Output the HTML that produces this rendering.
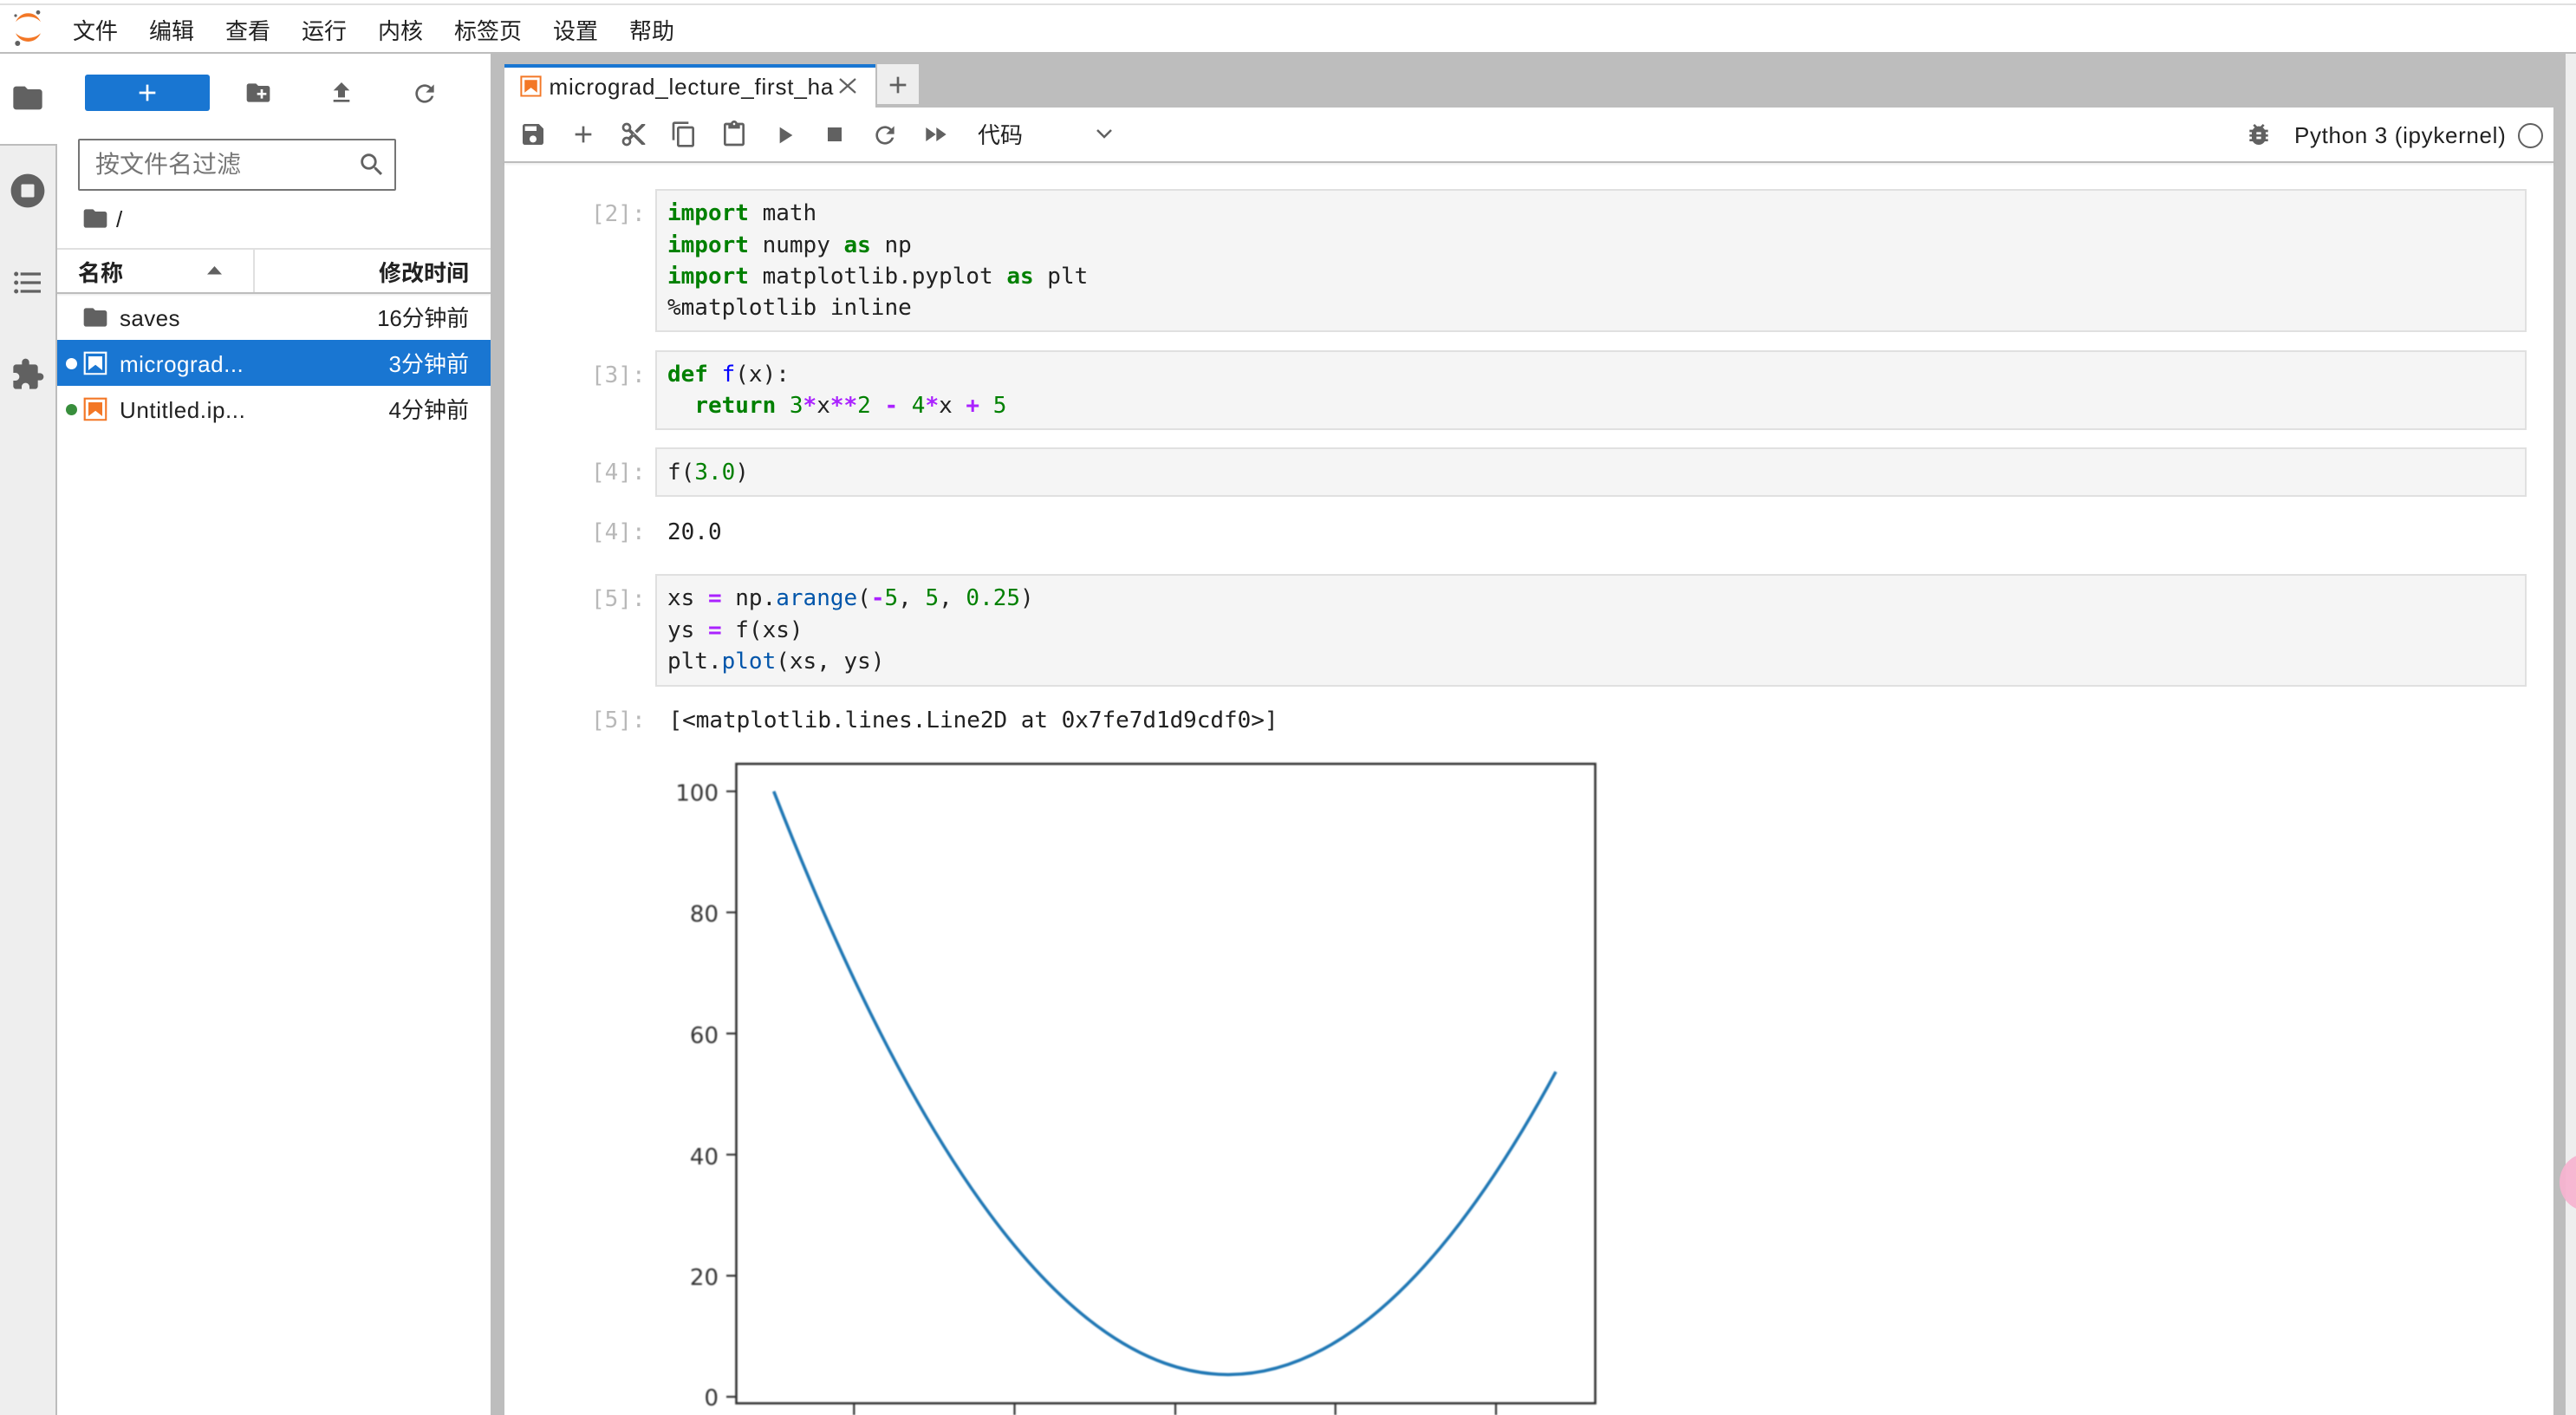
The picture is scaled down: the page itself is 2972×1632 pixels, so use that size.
<!DOCTYPE html>
<html lang="zh">
<head>
<meta charset="utf-8">
<title>JupyterLab</title>
<style>
html,body{margin:0;padding:0;width:2972px;height:1632px;overflow:hidden;background:#fff}
body{position:relative;font-family:"Liberation Sans","Noto Sans CJK SC",sans-serif;color:#212121}
.a{position:absolute}
.t{position:absolute;white-space:pre;font-size:26px;line-height:40px}
svg.i{position:absolute;fill:#616161;overflow:visible}
.c{position:absolute;left:756px;width:2159px;box-sizing:border-box;border:2px solid #e0e0e0;background:#f5f5f5}
.m{position:absolute;left:770px;white-space:pre;font-family:"DejaVu Sans Mono",monospace;font-size:26px;line-height:36px;color:#212121}
.p{position:absolute;left:682px;white-space:pre;font-family:"DejaVu Sans Mono",monospace;font-size:26px;line-height:36px;color:#b8b8b8}
.k{color:#008000;font-weight:bold}
.n{color:#008000}
.o{color:#aa22ff;font-weight:bold}
.f{color:#0000ff}
.v{color:#0055aa}
</style>
</head>
<body>
<!-- top bar -->
<div class="a" style="left:0;top:4px;width:2972px;height:2px;background:#e0e0e0"></div>
<div class="a" style="left:0;top:60px;width:2972px;height:2px;background:#bdbdbd"></div>
<svg class="a" style="left:0;top:0" width="60" height="60">
<path fill="#f37726" d="M18 25.3C21 19 26 15.3 32.5 15.3S44 19 47 25.3C43 21 38 19.3 32.5 19.3S22 21 18 25.3z"/>
<path fill="#f37726" d="M18 38.3C21 44.5 26 48 32.5 48S44 44.5 47 38.3C43 42 38 43.7 32.5 43.7S22 42 18 38.3z"/>
<circle cx="44" cy="14.3" r="2.4" fill="#616161"/><circle cx="18" cy="18" r="1.6" fill="#616161"/><circle cx="20.3" cy="50" r="3" fill="#616161"/>
</svg>
<div class="t" style="left:84px;top:16px">文件</div>
<div class="t" style="left:172px;top:16px">编辑</div>
<div class="t" style="left:260px;top:16px">查看</div>
<div class="t" style="left:348px;top:16px">运行</div>
<div class="t" style="left:436px;top:16px">内核</div>
<div class="t" style="left:524px;top:16px">标签页</div>
<div class="t" style="left:638px;top:16px">设置</div>
<div class="t" style="left:726px;top:16px">帮助</div>

<!-- left sidebar -->
<div class="a" style="left:0;top:166px;width:64px;height:1466px;background:#eeeeee;border-top:2px solid #bdbdbd;border-right:2px solid #bdbdbd"></div>
<svg class="i" style="left:12px;top:93px" width="40" height="40" viewBox="0 0 24 24"><path d="M10 4H4c-1.1 0-1.99.9-1.99 2L2 18c0 1.1.9 2 2 2h16c1.1 0 2-.9 2-2V8c0-1.1-.9-2-2-2h-8l-2-2z"/></svg>
<svg class="i" style="left:12px;top:200px" width="40" height="40" viewBox="0 0 512 512"><path d="M256 8C119 8 8 119 8 256s111 248 248 248 248-111 248-248S393 8 256 8zm96 328c0 8.8-7.2 16-16 16H176c-8.8 0-16-7.2-16-16V176c0-8.8 7.2-16 16-16h160c8.8 0 16 7.2 16 16v160z"/></svg>
<svg class="i" style="left:12px;top:305.5px" width="40" height="40" viewBox="0 0 24 24"><path d="M7,5H21V7H7V5M7,13V11H21V13H7M4,4.5A1.5,1.5 0 0,1 5.5,6A1.5,1.5 0 0,1 4,7.5A1.5,1.5 0 0,1 2.5,6A1.5,1.5 0 0,1 4,4.5M4,10.5A1.5,1.5 0 0,1 5.5,12A1.5,1.5 0 0,1 4,13.5A1.5,1.5 0 0,1 2.5,12A1.5,1.5 0 0,1 4,10.5M7,19V17H21V19H7M4,16.5A1.5,1.5 0 0,1 5.5,18A1.5,1.5 0 0,1 4,19.5A1.5,1.5 0 0,1 2.5,18A1.5,1.5 0 0,1 4,16.5Z"/></svg>
<svg class="i" style="left:12px;top:412px" width="40" height="40" viewBox="0 0 24 24"><path d="M20.5 11H19V7c0-1.1-.9-2-2-2h-4V3.5C13 2.12 11.88 1 10.5 1S8 2.12 8 3.5V5H4c-1.1 0-1.99.9-1.99 2v3.8H3.5c1.49 0 2.7 1.21 2.7 2.7s-1.21 2.7-2.7 2.7H2V20c0 1.1.9 2 2 2h3.8v-1.5c0-1.49 1.21-2.7 2.7-2.7 1.49 0 2.7 1.21 2.7 2.7V22H17c1.1 0 2-.9 2-2v-4h1.5c1.38 0 2.5-1.12 2.5-2.5S21.88 11 20.5 11z"/></svg>

<!-- file panel toolbar -->
<div class="a" style="left:98px;top:86px;width:144px;height:42px;background:#1976d2;border-radius:3px"></div>
<svg class="i" style="left:154px;top:91px;fill:#fff" width="32" height="32" viewBox="0 0 24 24"><path d="M19 13h-6v6h-2v-6H5v-2h6V5h2v6h6v2z"/></svg>
<svg class="i" style="left:282px;top:91px" width="32" height="32" viewBox="0 0 24 24"><path d="M20 6h-8l-2-2H4c-1.11 0-1.99.89-1.99 2L2 18c0 1.11.89 2 2 2h16c1.11 0 2-.89 2-2V8c0-1.11-.89-2-2-2zm-1 8h-3v3h-2v-3h-3v-2h3V9h2v3h3v2z"/></svg>
<svg class="i" style="left:378px;top:91px" width="32" height="32" viewBox="0 0 24 24"><path d="M9 16h6v-6h4l-7-7-7 7h4zm-4 2h14v2H5z"/></svg>
<svg class="i" style="left:474px;top:91.5px" width="32" height="32" viewBox="0 0 24 24"><path d="M17.65 6.35C16.2 4.9 14.21 4 12 4c-4.42 0-7.99 3.58-7.99 8s3.57 8 7.99 8c3.73 0 6.84-2.55 7.73-6h-2.08c-.82 2.33-3.04 4-5.65 4-3.31 0-6-2.69-6-6s2.69-6 6-6c1.66 0 3.14.69 4.22 1.78L13 11h7V4l-2.35 2.35z"/></svg>

<!-- search -->
<div class="a" style="left:90px;top:160px;width:363px;height:56px;border:2px solid #757575;border-radius:2px"></div>
<div class="t" style="left:110px;top:170px;font-size:28px;color:#757575">按文件名过滤</div>
<svg class="i" style="left:412px;top:173px" width="34" height="34" viewBox="0 0 24 24"><path d="M15.5 14h-.79l-.28-.27C15.41 12.59 16 11.11 16 9.5 16 5.91 13.09 3 9.5 3S3 5.91 3 9.5 5.91 16 9.5 16c1.61 0 3.09-.59 4.23-1.57l.27.28v.79l5 4.99L20.49 19l-4.99-5zm-6 0C7.01 14 5 11.99 5 9.5S7.01 5 9.5 5 14 7.01 14 9.5 11.99 14 9.5 14z"/></svg>

<!-- breadcrumb -->
<svg class="i" style="left:94px;top:236px" width="32" height="32" viewBox="0 0 24 24"><path d="M10 4H4c-1.1 0-1.99.9-1.99 2L2 18c0 1.1.9 2 2 2h16c1.1 0 2-.9 2-2V8c0-1.1-.9-2-2-2h-8l-2-2z"/></svg>
<div class="t" style="left:134px;top:233px">/</div>

<!-- list header -->
<div class="a" style="left:66px;top:286px;width:500px;height:2px;background:#e0e0e0"></div>
<div class="a" style="left:292px;top:288px;width:2px;height:49px;background:#e0e0e0"></div>
<div class="t" style="left:90px;top:295px;font-weight:bold">名称</div>
<svg class="a" style="left:239px;top:307px" width="18" height="10"><path d="M0 9.5L8.5 0L17 9.5z" fill="#616161"/></svg>
<div class="t" style="right:2431px;top:295px;font-weight:bold">修改时间</div>
<div class="a" style="left:66px;top:337px;width:500px;height:2px;background:#bdbdbd;box-shadow:0 1px 2px rgba(0,0,0,.12)"></div>

<!-- rows -->
<svg class="i" style="left:94px;top:350px" width="32" height="32" viewBox="0 0 24 24"><path d="M10 4H4c-1.1 0-1.99.9-1.99 2L2 18c0 1.1.9 2 2 2h16c1.1 0 2-.9 2-2V8c0-1.1-.9-2-2-2h-8l-2-2z"/></svg>
<div class="t" style="left:138px;top:347px;letter-spacing:.4px">saves</div>
<div class="t" style="right:2431px;top:346.5px;letter-spacing:-.2px">16分钟前</div>

<div class="a" style="left:66px;top:392px;width:500px;height:53px;background:#1976d2"></div>
<div class="a" style="left:75.5px;top:412.5px;width:13px;height:13px;border-radius:50%;background:#fff"></div>
<svg class="a" style="left:94px;top:403px" width="32" height="32" viewBox="0 0 22 22"><path fill="#fff" d="M18.7 3.3v15.4H3.3V3.3h15.4m1.5-1.5H1.8v18.3h18.3l.1-18.3z"/><path fill="#fff" d="M16.5 16.5l-5.4-4.3-5.6 4.3v-11h11z"/></svg>
<div class="t" style="left:138px;top:400px;color:#fff;letter-spacing:.5px">micrograd...</div>
<div class="t" style="right:2431px;top:399.5px;color:#fff">3分钟前</div>

<div class="a" style="left:75.5px;top:465.5px;width:13px;height:13px;border-radius:50%;background:#388e3c"></div>
<svg class="a" style="left:94px;top:456px" width="32" height="32" viewBox="0 0 22 22"><path fill="#f37726" d="M18.7 3.3v15.4H3.3V3.3h15.4m1.5-1.5H1.8v18.3h18.3l.1-18.3z"/><path fill="#f37726" d="M16.5 16.5l-5.4-4.3-5.6 4.3v-11h11z"/></svg>
<div class="t" style="left:138px;top:453px;letter-spacing:.58px">Untitled.ip...</div>
<div class="t" style="right:2431px;top:452.5px">4分钟前</div>

<!-- main gray frame -->
<div class="a" style="left:566px;top:62px;width:16px;height:1570px;background:#bdbdbd"></div>
<div class="a" style="left:582px;top:62px;width:2364px;height:62px;background:#bdbdbd"></div>
<div class="a" style="left:2946px;top:62px;width:14px;height:1570px;background:#bdbdbd"></div>
<div class="a" style="left:2960px;top:62px;width:12px;height:1570px;background:#eeeeee"></div>

<!-- tab -->
<div class="a" style="left:582px;top:74px;width:428px;height:4px;background:#1976d2"></div>
<div class="a" style="left:582px;top:78px;width:428px;height:46px;background:#fff"></div>
<svg class="a" style="left:597.5px;top:84.5px" width="29" height="29" viewBox="0 0 22 22"><path fill="#f37726" d="M18.7 3.3v15.4H3.3V3.3h15.4m1.5-1.5H1.8v18.3h18.3l.1-18.3z"/><path fill="#f37726" d="M16.5 16.5l-5.4-4.3-5.6 4.3v-11h11z"/></svg>
<div class="t" style="left:633.5px;top:80px;letter-spacing:.8px">micrograd_lecture_first_ha</div>
<svg class="a" style="left:968px;top:90px" width="20" height="18"><path d="M1 1L19 17M19 1L1 17" stroke="#616161" stroke-width="2.2" fill="none"/></svg>
<div class="a" style="left:1010px;top:74px;width:48px;height:46px;background:#eeeeee;border-left:2px solid #bdbdbd;border-bottom:2px solid #bdbdbd"></div>
<svg class="i" style="left:1019.5px;top:82px" width="32" height="32" viewBox="0 0 24 24"><path d="M19 13h-6v6h-2v-6H5v-2h6V5h2v6h6v2z"/></svg>

<!-- notebook toolbar -->
<div class="a" style="left:582px;top:124px;width:2364px;height:1508px;background:#fff"></div>
<div class="a" style="left:582px;top:186px;width:2364px;height:2px;background:#bdbdbd;box-shadow:0 1px 3px rgba(0,0,0,.12)"></div>
<svg class="i" style="left:599px;top:139px" width="32" height="32" viewBox="0 0 24 24"><path d="M17 3H5c-1.11 0-2 .9-2 2v14c0 1.1.89 2 2 2h14c1.1 0 2-.9 2-2V7l-4-4zm-5 16c-1.66 0-3-1.34-3-3s1.34-3 3-3 3 1.34 3 3-1.34 3-3 3zm3-10H5V5h10v4z"/></svg>
<svg class="i" style="left:657px;top:139px" width="32" height="32" viewBox="0 0 24 24"><path d="M19 13h-6v6h-2v-6H5v-2h6V5h2v6h6v2z"/></svg>
<svg class="i" style="left:715px;top:139px" width="32" height="32" viewBox="0 0 24 24"><path d="M9.64 7.64c.23-.5.36-1.05.36-1.64 0-2.21-1.79-4-4-4S2 3.79 2 6s1.79 4 4 4c.59 0 1.14-.13 1.64-.36L10 12l-2.36 2.36C7.14 14.13 6.59 14 6 14c-2.21 0-4 1.79-4 4s1.79 4 4 4 4-1.79 4-4c0-.59-.13-1.14-.36-1.64L12 14l7 7h3v-1L9.64 7.64zM6 8c-1.1 0-2-.89-2-2s.9-2 2-2 2 .89 2 2-.9 2-2 2zm0 12c-1.1 0-2-.89-2-2s.9-2 2-2 2 .89 2 2-.9 2-2 2zm6-7.5c-.28 0-.5-.22-.5-.5s.22-.5.5-.5.5.22.5.5-.22.5-.5.5zM19 3l-6 6 2 2 7-7V3z"/></svg>
<svg class="i" style="left:773px;top:139px" width="32" height="32" viewBox="0 0 24 24"><path d="M16 1H4c-1.1 0-2 .9-2 2v14h2V3h12V1zm3 4H8c-1.1 0-2 .9-2 2v14c0 1.1.9 2 2 2h11c1.1 0 2-.9 2-2V7c0-1.1-.9-2-2-2zm0 16H8V7h11v14z"/></svg>
<svg class="i" style="left:831px;top:139px" width="32" height="32" viewBox="0 0 24 24"><path d="M19 2h-4.18C14.4.84 13.3 0 12 0c-1.3 0-2.4.84-2.82 2H5c-1.1 0-2 .9-2 2v16c0 1.1.9 2 2 2h14c1.1 0 2-.9 2-2V4c0-1.1-.9-2-2-2zm-7 0c.55 0 1 .45 1 1s-.45 1-1 1-1-.45-1-1 .45-1 1-1zm7 18H5V4h2v3h10V4h2v16z"/></svg>
<svg class="i" style="left:889px;top:139.5px" width="32" height="32" viewBox="0 0 24 24"><path d="M8 5v14l11-7z"/></svg>
<svg class="i" style="left:947px;top:139px" width="32" height="32" viewBox="0 0 24 24"><path d="M6 6h12v12H6z"/></svg>
<svg class="i" style="left:1005px;top:139.5px" width="32" height="32" viewBox="0 0 24 24"><path d="M17.65 6.35C16.2 4.9 14.21 4 12 4c-4.42 0-7.99 3.58-7.99 8s3.57 8 7.99 8c3.73 0 6.84-2.55 7.73-6h-2.08c-.82 2.33-3.04 4-5.65 4-3.31 0-6-2.69-6-6s2.69-6 6-6c1.66 0 3.14.69 4.22 1.78L13 11h7V4l-2.35 2.35z"/></svg>
<svg class="i" style="left:1063px;top:139px" width="32" height="32" viewBox="0 0 24 24"><path d="M4 18l8.5-6L4 6v12zm9-12v12l8.5-6L13 6z"/></svg>
<div class="t" style="left:1128px;top:136px">代码</div>
<svg class="a" style="left:1264px;top:148px" width="20" height="12"><path d="M2 2L10 10L18 2" stroke="#616161" stroke-width="2.5" fill="none"/></svg>
<svg class="i" style="left:2590px;top:139px" width="32" height="32" viewBox="0 0 24 24"><path d="M20 8h-2.81c-.45-.78-1.07-1.45-1.82-1.96L17 4.41 15.59 3l-2.17 2.17C12.96 5.06 12.49 5 12 5c-.49 0-.96.06-1.41.17L8.41 3 7 4.41l1.62 1.63C7.88 6.55 7.26 7.22 6.81 8H4v2h2.09c-.05.33-.09.66-.09 1v1H4v2h2v1c0 .34.04.67.09 1H4v2h2.81c1.04 1.79 2.97 3 5.19 3s4.15-1.21 5.19-3H20v-2h-2.09c.05-.33.09-.66.09-1v-1h2v-2h-2v-1c0-.34-.04-.67-.09-1H20V8zm-6 8h-4v-2h4v2zm0-4h-4v-2h4v2z"/></svg>
<div class="t" style="left:2647px;top:136px;letter-spacing:.66px">Python 3 (ipykernel)</div>
<div class="a" style="left:2905px;top:141.5px;width:25px;height:25px;border:2px solid #616161;border-radius:50%"></div>

<!-- cells -->
<div class="c" style="top:218px;height:165px"></div>
<div class="p" style="top:229px">[2]:</div>
<div class="m" style="top:228px"><span class="k">import</span> math</div>
<div class="m" style="top:264.5px"><span class="k">import</span> numpy <span class="k">as</span> np</div>
<div class="m" style="top:301px"><span class="k">import</span> matplotlib.pyplot <span class="k">as</span> plt</div>
<div class="m" style="top:337px">%matplotlib inline</div>

<div class="c" style="top:404px;height:92px"></div>
<div class="p" style="top:415px">[3]:</div>
<div class="m" style="top:414px"><span class="k">def</span> <span class="f">f</span>(x):</div>
<div class="m" style="top:450px">  <span class="k">return</span> <span class="n">3</span><span class="o">*</span>x<span class="o">**</span><span class="n">2</span> <span class="o">-</span> <span class="n">4</span><span class="o">*</span>x <span class="o">+</span> <span class="n">5</span></div>

<div class="c" style="top:516px;height:57px"></div>
<div class="p" style="top:527px">[4]:</div>
<div class="m" style="top:526.5px">f(<span class="n">3.0</span>)</div>

<div class="p" style="top:596px">[4]:</div>
<div class="m" style="top:596px">20.0</div>

<div class="c" style="top:662px;height:130px"></div>
<div class="p" style="top:673px">[5]:</div>
<div class="m" style="top:672px">xs <span class="o">=</span> np.<span class="v">arange</span>(<span class="o">-</span><span class="n">5</span>, <span class="n">5</span>, <span class="n">0.25</span>)</div>
<div class="m" style="top:709px">ys <span class="o">=</span> f(xs)</div>
<div class="m" style="top:745px">plt.<span class="v">plot</span>(xs, ys)</div>

<div class="p" style="top:813px">[5]:</div>
<div class="m" style="top:813px;left:771.5px;letter-spacing:-.03px">[&lt;matplotlib.lines.Line2D at 0x7fe7d1d9cdf0&gt;]</div>

<!-- plot -->
<svg class="a" style="left:780px;top:860px;filter:blur(.7px)" width="1080" height="772" viewBox="780 860 1080 772">
<path d="M892.7 912.7Q1343.85 2070.1 1795 1236.1" fill="none" stroke="#1f77b4" stroke-width="3.6"/>
<rect x="849.5" y="881" width="991" height="737.5" fill="none" stroke="#333" stroke-width="2.6"/>
<g stroke="#333" stroke-width="2.2">
<path d="M838 912.7H849M838 1052.3H849M838 1192H849M838 1331.7H849M838 1471.4H849M838 1611H849"/>
<path d="M985.3 1619V1632M1170.5 1619V1632M1356 1619V1632M1540.7 1619V1632M1726 1619V1632"/>
</g>
<g font-family="DejaVu Sans" font-size="26" fill="#333" text-anchor="end">
<text x="829" y="923.5">100</text>
<text x="829" y="1063">80</text>
<text x="829" y="1203">60</text>
<text x="829" y="1343">40</text>
<text x="829" y="1482">20</text>
<text x="829" y="1621">0</text>
</g>
</svg>

<!-- pink circle -->
<div class="a" style="left:2953px;top:1330px;width:66px;height:67px;border-radius:50%;background:#f6b3d0;opacity:.95"></div>
</body>
</html>
